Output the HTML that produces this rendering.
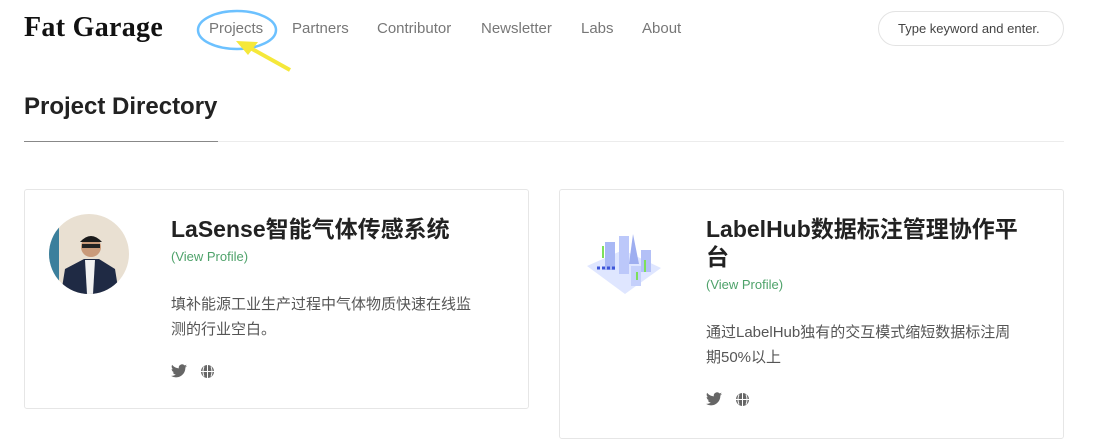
<!DOCTYPE html><html><head><meta charset="utf-8"><style>
*{box-sizing:border-box;margin:0;padding:0}
body{width:1120px;height:434px;overflow:hidden;background:#fff;font-family:"Liberation Sans","Noto Sans CJK SC",sans-serif;position:relative;color:#222}
.abs{position:absolute}
.logo{left:24px;top:12px;font-family:"Liberation Serif",serif;font-weight:bold;font-size:28px;color:#111;letter-spacing:0.3px}
.nav{top:20px;font-size:15px;color:#777}
.search{left:878px;top:11px;width:186px;height:35px;border:1px solid #e3e3e3;border-radius:18px;font-size:13px;color:#444;padding:9px 0 0 19px}
h1{position:absolute;left:24px;top:93px;font-size:24px;font-weight:bold;color:#222}
.card{position:absolute;top:189px;border:1px solid #e6e6e6;border-radius:3px;background:#fff}
.t{position:absolute;font-size:23px;font-weight:bold;color:#222;line-height:28px}
.v{position:absolute;font-size:13px;color:#4ea26a}
.d{position:absolute;font-size:15px;color:#555;line-height:25px}
</style></head><body>
<div class="abs logo">Fat Garage</div>
<div class="abs nav" style="left:209px">Projects</div>
<div class="abs nav" style="left:292px">Partners</div>
<div class="abs nav" style="left:377px">Contributor</div>
<div class="abs nav" style="left:481px">Newsletter</div>
<div class="abs nav" style="left:581px">Labs</div>
<div class="abs nav" style="left:642px">About</div>
<svg class="abs" style="left:190px;top:8px" width="110" height="70"><ellipse cx="47" cy="22" rx="39" ry="19" fill="none" stroke="#6cc1ff" stroke-width="2.5"/><path d="M100 62 L55 37" stroke="#f5e83a" stroke-width="4"/><path d="M46 33 L68 34 L58 47Z" fill="#f5e83a"/></svg>
<div class="abs search">Type keyword and enter.</div>
<h1>Project Directory</h1>
<div class="abs" style="left:24px;top:141px;width:1040px;height:1px;background:#ececec"></div>
<div class="abs" style="left:24px;top:141px;width:194px;height:1px;background:#888"></div>

<div class="card" style="left:24px;width:505px;height:220px"></div>
<svg class="abs" style="left:49px;top:214px" width="80" height="80"><defs><clipPath id="c"><circle cx="40" cy="40" r="40"/></clipPath></defs><g clip-path="url(#c)"><rect width="80" height="80" fill="#e9e0d2"/><rect width="10" height="80" fill="#3b7f9c"/><path d="M12 80 L16 55 L35 45 L50 45 L66 55 L70 80Z" fill="#1f2a44"/><path d="M36 46 L46 46 L44 80 L38 80Z" fill="#f2f2f2"/><circle cx="42" cy="33" r="10" fill="#c99a7a"/><path d="M31 28 Q42 16 53 28Z" fill="#1a1a1a"/><rect x="33" y="30" width="18" height="4" fill="#222"/></g></svg>
<div class="t" style="left:171px;top:215px">LaSense智能气体传感系统</div>
<div class="v" style="left:171px;top:249px">(View Profile)</div>
<div class="d" style="left:171px;top:292px">填补能源工业生产过程中气体物质快速在线监<br>测的行业空白。</div>
<svg class="abs" style="left:171px;top:364px" width="16" height="14" viewBox="0 0 24 20"><path d="M24 2.4a10 10 0 0 1-2.8.8A5 5 0 0 0 23.3.4a10 10 0 0 1-3.1 1.2A4.9 4.9 0 0 0 11.8 6 14 14 0 0 1 1.7.9a4.9 4.9 0 0 0 1.5 6.6A4.9 4.9 0 0 1 1 6.9a4.9 4.9 0 0 0 3.9 4.9 5 5 0 0 1-2.2.1 4.9 4.9 0 0 0 4.6 3.4A9.9 9.9 0 0 1 0 17.3 14 14 0 0 0 7.5 19.5c9 0 14-7.5 14-14v-.6A10 10 0 0 0 24 2.4z" fill="#666"/></svg>
<svg class="abs" style="left:200px;top:364px" width="15" height="15"><circle cx="7.5" cy="7.5" r="6.5" fill="#666"/><path d="M1 7.5h13M7.5 1v13M4 2.5q-2 5 0 10M11 2.5q2 5 0 10" stroke="#fff" stroke-width="1" fill="none"/></svg>

<div class="card" style="left:559px;width:505px;height:250px"></div>
<svg class="abs" style="left:585px;top:232px" width="80" height="65"><path d="M2 34 L38 18 L76 36 L40 62Z" fill="#dfe6ff"/><rect x="20" y="10" width="10" height="28" fill="#a9b8f5"/><rect x="34" y="4" width="10" height="38" fill="#bcc8fa"/><path d="M48 2 L54 32 L44 32Z" fill="#9eaef0"/><rect x="56" y="18" width="10" height="22" fill="#b3c0f7"/><rect x="46" y="34" width="10" height="20" fill="#c5d0fb"/><path d="M12 36h20" stroke="#3d55d8" stroke-width="3" stroke-dasharray="3 2"/><path d="M18 14v12M60 28v12M52 40v8" stroke="#7de05a" stroke-width="2"/></svg>
<div class="t" style="left:706px;top:215px">LabelHub数据标注管理协作平<br>台</div>
<div class="v" style="left:706px;top:277px">(View Profile)</div>
<div class="d" style="left:706px;top:320px">通过LabelHub独有的交互模式缩短数据标注周<br>期50%以上</div>
<svg class="abs" style="left:706px;top:392px" width="16" height="14" viewBox="0 0 24 20"><path d="M24 2.4a10 10 0 0 1-2.8.8A5 5 0 0 0 23.3.4a10 10 0 0 1-3.1 1.2A4.9 4.9 0 0 0 11.8 6 14 14 0 0 1 1.7.9a4.9 4.9 0 0 0 1.5 6.6A4.9 4.9 0 0 1 1 6.9a4.9 4.9 0 0 0 3.9 4.9 5 5 0 0 1-2.2.1 4.9 4.9 0 0 0 4.6 3.4A9.9 9.9 0 0 1 0 17.3 14 14 0 0 0 7.5 19.5c9 0 14-7.5 14-14v-.6A10 10 0 0 0 24 2.4z" fill="#666"/></svg>
<svg class="abs" style="left:735px;top:392px" width="15" height="15"><circle cx="7.5" cy="7.5" r="6.5" fill="#666"/><path d="M1 7.5h13M7.5 1v13M4 2.5q-2 5 0 10M11 2.5q2 5 0 10" stroke="#fff" stroke-width="1" fill="none"/></svg>
</body></html>
